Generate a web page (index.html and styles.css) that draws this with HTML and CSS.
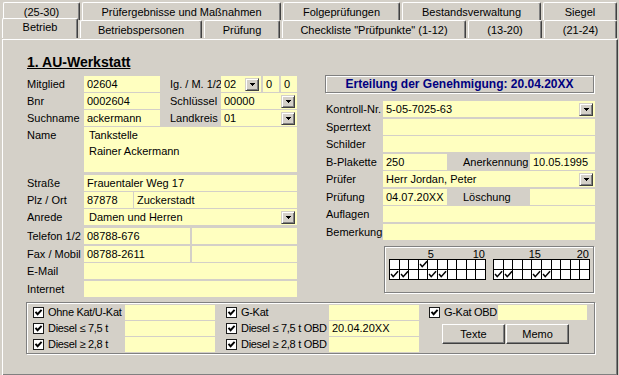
FILE: index.html
```html
<!DOCTYPE html>
<html lang="de">
<head>
<meta charset="utf-8">
<title>Betrieb</title>
<link rel="stylesheet" href="styles.css">
</head>
<body>
<div class="win">
  <div class="tabs">
    <div class="tabrow r1">
      <div class="tab">(25-30)</div>
      <div class="tab">Prüfergebnisse und Maßnahmen</div>
      <div class="tab">Folgeprüfungen</div>
      <div class="tab">Bestandsverwaltung</div>
      <div class="tab">Siegel</div>
    </div>
    <div class="tabrow r2">
      <div class="tab sel">Betrieb</div>
      <div class="tab">Betriebspersonen</div>
      <div class="tab">Prüfung</div>
      <div class="tab">Checkliste &quot;Prüfpunkte&quot; (1-12)</div>
      <div class="tab">(13-20)</div>
      <div class="tab">(21-24)</div>
    </div>
  </div>

  <div class="panel">
    <div class="main">
      <div class="col left">
        <div class="heading">1. AU-Werkstatt</div>

        <div class="row">
          <span class="lbl">Mitglied</span>
          <span class="f w76">02604</span>
          <span class="lbl2 w51">Ig. / M. 1/2</span>
          <span class="f dd w40"><span class="txt">02</span><span class="btn"><svg width="5" height="3" viewBox="0 0 5 3"><path d="M0 0h5v1h-1v1h-1v1h-1v-1h-1v-1h-1z"/></svg></span></span>
          <span class="f w16 ml2">0</span>
          <span class="f w16 ml2">0</span>
        </div>
        <div class="row">
          <span class="lbl">Bnr</span>
          <span class="f w76">0002604</span>
          <span class="lbl2 w51">Schlüssel</span>
          <span class="f dd w76"><span class="txt">00000</span><span class="btn"><svg width="5" height="3" viewBox="0 0 5 3"><path d="M0 0h5v1h-1v1h-1v1h-1v-1h-1v-1h-1z"/></svg></span></span>
        </div>
        <div class="row">
          <span class="lbl">Suchname</span>
          <span class="f w76">ackermann</span>
          <span class="lbl2 w51">Landkreis</span>
          <span class="f dd w76"><span class="txt">01</span><span class="btn"><svg width="5" height="3" viewBox="0 0 5 3"><path d="M0 0h5v1h-1v1h-1v1h-1v-1h-1v-1h-1z"/></svg></span></span>
        </div>
        <div class="row name">
          <span class="lbl">Name</span>
          <span class="f memo w213">Tankstelle<br>Rainer Ackermann</span>
        </div>
        <div class="row">
          <span class="lbl">Straße</span>
          <span class="f w213">Frauentaler Weg 17</span>
        </div>
        <div class="row">
          <span class="lbl">Plz / Ort</span>
          <span class="f w49">87878</span>
          <span class="f w163 ml1">Zuckerstadt</span>
        </div>
        <div class="row anrede">
          <span class="lbl">Anrede</span>
          <span class="f dd w213 pad5"><span class="txt">Damen und Herren</span><span class="btn"><svg width="5" height="3" viewBox="0 0 5 3"><path d="M0 0h5v1h-1v1h-1v1h-1v-1h-1v-1h-1z"/></svg></span></span>
        </div>
        <div class="row low">
          <span class="lbl">Telefon 1/2</span>
          <span class="f w106">08788-676</span>
          <span class="f w105 ml2"></span>
        </div>
        <div class="row low">
          <span class="lbl">Fax / Mobil</span>
          <span class="f w106">08788-2611</span>
          <span class="f w105 ml2"></span>
        </div>
        <div class="row low">
          <span class="lbl">E-Mail</span>
          <span class="f w213"></span>
        </div>
        <div class="row low">
          <span class="lbl">Internet</span>
          <span class="f w213"></span>
        </div>
      </div>

      <div class="col right">
        <div class="erteilung">Erteilung der Genehmigung: 20.04.20XX</div>

        <div class="rrow">
          <span class="rlbl">Kontroll-Nr.</span>
          <span class="f dd w212"><span class="txt">5-05-7025-63</span><span class="btn"><svg width="5" height="3" viewBox="0 0 5 3"><path d="M0 0h5v1h-1v1h-1v1h-1v-1h-1v-1h-1z"/></svg></span></span>
        </div>
        <div class="rrow">
          <span class="rlbl">Sperrtext</span>
          <span class="f w212"></span>
        </div>
        <div class="rrow">
          <span class="rlbl">Schilder</span>
          <span class="f w212"></span>
        </div>
        <div class="rrow">
          <span class="rlbl">B-Plakette</span>
          <span class="f w64">250</span>
          <span class="lbl3">Anerkennung</span>
          <span class="f w65">10.05.1995</span>
        </div>
        <div class="rrow">
          <span class="rlbl">Prüfer</span>
          <span class="f dd w212"><span class="txt">Herr Jordan, Peter</span><span class="btn"><svg width="5" height="3" viewBox="0 0 5 3"><path d="M0 0h5v1h-1v1h-1v1h-1v-1h-1v-1h-1z"/></svg></span></span>
        </div>
        <div class="rrow">
          <span class="rlbl">Prüfung</span>
          <span class="f w64">04.07.20XX</span>
          <span class="lbl3">Löschung</span>
          <span class="f w65"></span>
        </div>
        <div class="rrow">
          <span class="rlbl">Auflagen</span>
          <span class="f w212"></span>
        </div>
        <div class="rrow">
          <span class="rlbl">Bemerkung</span>
          <span class="f w212"></span>
        </div>

        <div class="checkbox-panel">
          <div class="chk-block">
            <div class="nums">
              <span class="n c5"><span>5</span></span>
              <span class="n c10"><span>10</span></span>
            </div>
            <div class="cgrid">
              <span></span><span></span><span></span><span class="ok"><svg viewBox="0 0 8 8"><path d="M1 3.5L3 6L7.5 1"/></svg></span><span></span><span></span><span></span><span></span><span></span><span></span>
              <span class="ok"><svg viewBox="0 0 8 8"><path d="M1 3.5L3 6L7.5 1"/></svg></span><span class="ok"><svg viewBox="0 0 8 8"><path d="M1 3.5L3 6L7.5 1"/></svg></span><span></span><span></span><span class="ok"><svg viewBox="0 0 8 8"><path d="M1 3.5L3 6L7.5 1"/></svg></span><span class="ok"><svg viewBox="0 0 8 8"><path d="M1 3.5L3 6L7.5 1"/></svg></span><span></span><span></span><span></span><span></span>
            </div>
          </div>
          <div class="chk-block">
            <div class="nums">
              <span class="n c5"><span>15</span></span>
              <span class="n c10"><span>20</span></span>
            </div>
            <div class="cgrid">
              <span></span><span></span><span></span><span></span><span></span><span></span><span></span><span></span><span></span><span></span>
              <span class="ok"><svg viewBox="0 0 8 8"><path d="M1 3.5L3 6L7.5 1"/></svg></span><span class="ok"><svg viewBox="0 0 8 8"><path d="M1 3.5L3 6L7.5 1"/></svg></span><span></span><span></span><span class="ok"><svg viewBox="0 0 8 8"><path d="M1 3.5L3 6L7.5 1"/></svg></span><span class="ok"><svg viewBox="0 0 8 8"><path d="M1 3.5L3 6L7.5 1"/></svg></span><span></span><span></span><span></span><span></span>
            </div>
          </div>
        </div>
      </div>
    </div>

    <div class="group">
      <div class="gcol g1">
        <span class="cb"><span class="box"><svg viewBox="0 0 9 9"><path d="M1.5 3.8L3.6 6.2L7.6 1.8"/></svg></span>Ohne Kat/U-Kat</span>
        <span class="f"></span>
        <span class="cb"><span class="box"><svg viewBox="0 0 9 9"><path d="M1.5 3.8L3.6 6.2L7.6 1.8"/></svg></span>Diesel ≤ 7,5 t</span>
        <span class="f"></span>
        <span class="cb"><span class="box"><svg viewBox="0 0 9 9"><path d="M1.5 3.8L3.6 6.2L7.6 1.8"/></svg></span>Diesel ≥ 2,8 t</span>
        <span class="f"></span>
      </div>
      <div class="gcol g2">
        <span class="cb"><span class="box"><svg viewBox="0 0 9 9"><path d="M1.5 3.8L3.6 6.2L7.6 1.8"/></svg></span>G-Kat</span>
        <span class="f"></span>
        <span class="cb"><span class="box"><svg viewBox="0 0 9 9"><path d="M1.5 3.8L3.6 6.2L7.6 1.8"/></svg></span>Diesel ≤ 7,5 t OBD</span>
        <span class="f">20.04.20XX</span>
        <span class="cb"><span class="box"><svg viewBox="0 0 9 9"><path d="M1.5 3.8L3.6 6.2L7.6 1.8"/></svg></span>Diesel ≥ 2,8 t OBD</span>
        <span class="f"></span>
      </div>
      <div class="gcol g3">
        <span class="cb"><span class="box"><svg viewBox="0 0 9 9"><path d="M1.5 3.8L3.6 6.2L7.6 1.8"/></svg></span>G-Kat OBD</span>
        <span class="f"></span>
        <div class="buttons">
          <span class="pbtn">Texte</span>
          <span class="pbtn">Memo</span>
        </div>
      </div>
    </div>
  </div>
</div>
</body>
</html>
```

FILE: styles.css
```css
* { box-sizing: border-box; }
html, body { margin: 0; padding: 0; }
body {
  width: 619px;
  height: 375px;
  overflow: hidden;
  background: #d4d0c8;
  color: #000;
  font: 11px "Liberation Sans", Arial, sans-serif;
}
.win { padding-left: 2px; }

/* ---------- tabs ---------- */
.tabs { height: 37px; }
.tabrow { display: grid; column-gap: 2px; }
.r1 {
  margin-left: 1px;
  margin-top: 2px;
  height: 18px;
  grid-template-columns: 77px 199px 117px 139px 74px;
}
.r2 {
  height: 17px;
  grid-template-columns: 76px 122px 76px 184px 74px 73px;
}
.tab {
  background: #d4d0c8;
  border-top: 1px solid #fff;
  border-left: 1px solid #fff;
  border-right: 1px solid #404040;
  box-shadow: inset -1px 0 #808080;
  border-radius: 2px 2px 0 0;
  display: flex;
  align-items: center;
  justify-content: center;
  white-space: nowrap;
  overflow: hidden;
}
.tab.sel {
  position: relative;
  z-index: 2;
  margin-top: -2px;
  height: 20px;
  padding-bottom: 3px;
}

/* ---------- panel ---------- */
.panel {
  width: 616px;
  height: 337px;
  border-top: 1px solid #fff;
  border-left: 1px solid #fff;
  border-right: 1px solid #404040;
  border-bottom: 1px solid #404040;
  box-shadow: inset -1px -1px #808080;
  padding: 14px 0 0 24px;
}
.main { display: flex; height: 248px; }
.col { width: 270px; }
.right { margin-left: 28px; }

.heading {
  height: 16px;
  line-height: 16px;
  margin-bottom: 6px;
  font-weight: bold;
  font-size: 14px;
  text-decoration: underline;
}

.row {
  display: flex;
  height: 16px;
  line-height: 16px;
  margin-bottom: 1px;
  white-space: nowrap;
}
.row.name { height: 45px; margin-bottom: 3px; }
.row.anrede { margin-bottom: 3px; }
.row.low { margin-bottom: 1.5px; }
.lbl { width: 57px; flex: none; overflow: hidden; }
.lbl2 { margin-left: 10px; flex: none; overflow: hidden; }

.f {
  display: block;
  flex: none;
  height: 100%;
  background: #ffffc0;
  padding-left: 3px;
  white-space: nowrap;
  overflow: hidden;
}
.f.memo { line-height: 16px; padding-left: 5px; white-space: normal; }
.f.pad5 { padding-left: 5px; }
.f.dd { display: flex; align-items: center; padding-right: 2px; }
.f.dd .txt { flex: 1; overflow: hidden; }
.btn {
  flex: none;
  width: 14px;
  height: 13px;
  background: #d4d0c8;
  border: 1px solid;
  border-color: #d4d0c8 #404040 #404040 #d4d0c8;
  box-shadow: inset 1px 1px #fff, inset -1px -1px #808080;
  display: flex;
  align-items: center;
  justify-content: center;
}
.btn svg { display: block; fill: #000; }

.w16 { width: 16px; }
.w40 { width: 40px; }
.w49 { width: 49px; }
.w51 { width: 51px; }
.w64 { width: 64px; }
.w65 { width: 65px; }
.w76 { width: 76px; }
.w105 { width: 105px; }
.w106 { width: 106px; }
.w163 { width: 163px; }
.w212 { width: 212px; }
.w213 { width: 213px; }
.ml1 { margin-left: 1px; }
.ml2 { margin-left: 2px; }

/* ---------- right column ---------- */
.erteilung {
  margin-top: 21px;
  margin-bottom: 8px;
  height: 18px;
  width: 269px;
  border: 1px solid #808080;
  box-shadow: inset 1px 1px #fff, 1px 1px #fff;
  text-align: center;
  line-height: 16px;
  font-weight: bold;
  font-size: 12px;
  color: #000080;
}
.rrow {
  display: flex;
  height: 16px;
  line-height: 16px;
  margin-bottom: 1.5px;
  white-space: nowrap;
}
.rlbl { width: 58px; flex: none; padding-left: 1px; overflow: hidden; }
.lbl3 { width: 83px; flex: none; padding-left: 16px; overflow: hidden; }

.checkbox-panel {
  margin-top: 6px;
  margin-left: 59px;
  width: 210px;
  height: 47px;
  border: 1px solid #808080;
  box-shadow: inset 1px 1px #fff, 1px 1px #fff;
  padding: 2px 0 0 4px;
  display: flex;
  gap: 7px;
}
.chk-block { width: 97px; }
.nums {
  display: grid;
  grid-template-columns: repeat(10, 1fr);
  column-gap: 1px;
  padding: 0 1px;
  height: 10px;
  line-height: 10px;
}
.n { display: flex; justify-content: center; white-space: nowrap; }
.n.c5 { grid-column: 5; }
.n.c10 { grid-column: 10; }
.cgrid {
  display: grid;
  grid-template-columns: repeat(10, 1fr);
  grid-template-rows: 9px 9px;
  gap: 1px;
  padding: 1px;
  background: #000;
  width: 97px;
  height: 21px;
}
.cgrid span { background: #fff; display: block; }
.cgrid svg { display: block; width: 100%; height: 100%; }
.cgrid path { fill: none; stroke: #000; stroke-width: 1.4; }

/* ---------- bottom group ---------- */
.group {
  margin-left: -1px;
  width: 569px;
  height: 52px;
  border: 1px solid #808080;
  box-shadow: inset 1px 1px #fff, 1px 1px #fff;
  padding: 2px 0 0 6px;
  display: flex;
}
.gcol {
  display: grid;
  grid-template-rows: 15px 15px 15px;
  row-gap: 1px;
}
.g1 { grid-template-columns: 92px 90px; }
.g2 { grid-template-columns: 103px 90px; margin-left: 11px; }
.g3 { grid-template-columns: 69px 89px; margin-left: 10px; }
.gcol .f { height: 15px; line-height: 15px; }
.cb {
  display: flex;
  align-items: center;
  white-space: nowrap;
  line-height: 15px;
  letter-spacing: -0.3px;
}
.box {
  flex: none;
  width: 11px;
  height: 11px;
  margin-right: 4px;
  background: #fff;
  border: 1px solid #1a1a1a;
}
.box svg { display: block; width: 9px; height: 9px; }
.box path { fill: none; stroke: #000; stroke-width: 1.9; }

.buttons {
  grid-column: 1 / 3;
  grid-row: 2 / 4;
  display: flex;
  gap: 1px;
  margin-left: 13px;
  margin-top: 3px;
  height: 20px;
}
.pbtn {
  width: 63px;
  height: 20px;
  border: 1px solid;
  border-color: #fff #404040 #404040 #fff;
  box-shadow: inset -1px -1px #808080;
  text-align: center;
  line-height: 18px;
}
```
